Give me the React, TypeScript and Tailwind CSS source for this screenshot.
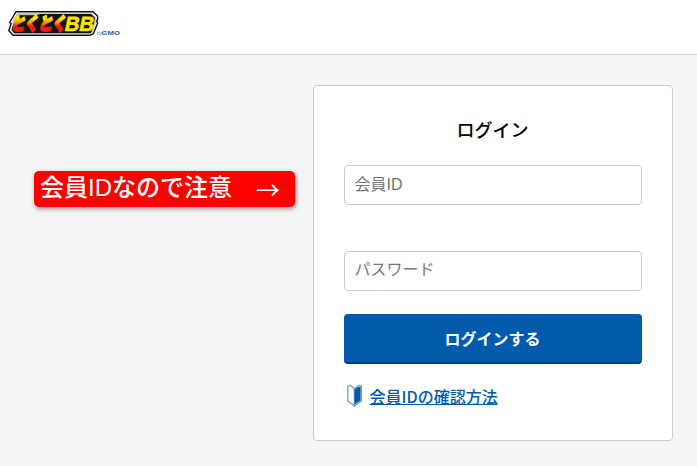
import React from "react";

const Logo: React.FC = () => (
  <svg
    className="overflow-visible"
    width="113"
    height="26"
    viewBox="0 0 113 26"
    role="img"
    aria-label="とくとくBB byGMO"
  >
    <defs>
      <linearGradient id="flame" gradientUnits="userSpaceOnUse" x1="0" y1="4" x2="0" y2="21">
        <stop offset="0.2" stopColor="#ffe600" />
        <stop offset="0.45" stopColor="#ff9100" />
        <stop offset="0.65" stopColor="#e8200f" />
      </linearGradient>
    </defs>
    {/* Badge plate */}
    <path
      d="M8 .7H85L89.6 5V8.5L88.6 10L89.6 12L85.5 22.5L82 24.3H5L.8 19.5L3.2 12.5L1.7 11.5Z"
      fill="#fff"
      stroke="#111"
      strokeWidth="1.4"
    />
    <path d="M9 2.2H84L87.8 6V12L84 22.5H5.8L3 19L5 12.5L4 11Z" fill="#bdbdbd" />
    <path d="M11 4.3H28L32 3H83L87 7L85.8 12L83 22.3H6L3.6 18.5L6 12.5L8.5 11Z" fill="#151111" />
    <g transform="skewX(-12)" fontWeight="900">
      <text
        x="6.5"
        y="19.3"
        fontFamily='"Noto Sans CJK JP", sans-serif'
        fontSize="17.5"
        textLength="55"
        lengthAdjust="spacingAndGlyphs"
        fill="url(#flame)"
        stroke="url(#flame)"
        strokeWidth="2"
      >
        とくとく
      </text>
      <text
        x="60"
        y="20.3"
        fontFamily='"Liberation Sans", sans-serif'
        fontSize="20.5"
        textLength="29"
        lengthAdjust="spacingAndGlyphs"
        fill="#f6e500"
        stroke="#f6e500"
        strokeWidth="0.6"
      >
        BB
      </text>
    </g>
    <text x="89" y="24" fontFamily='"Liberation Sans", sans-serif' fontSize="5" fill="#3f8bc9">
      by
    </text>
    <text
      x="93.5"
      y="24"
      fontFamily='"Liberation Sans", sans-serif'
      fontSize="5.5"
      fontWeight="700"
      textLength="18.5"
      lengthAdjust="spacingAndGlyphs"
      fill="#1463ac"
    >
      GMO
    </text>
  </svg>
);

const BeginnerMark: React.FC = () => (
  <svg width="16" height="24" viewBox="0 0 16 24" aria-hidden="true">
    <path
      d="M.8 3.2Q.8 1.2 2.6 1.4Q5.5 2.4 7.5 5V22L.8 17Z"
      fill="#fff"
      stroke="#6b9dcc"
      strokeWidth="1.3"
    />
    <path
      d="M7.5 5Q9.5 2.4 12.4 1.4Q14.4 1.2 14.4 3.2V17L7.5 22Z"
      fill="#fff"
      stroke="#6b9dcc"
      strokeWidth="1.3"
    />
    <path d="M7.6 5.6Q10 3.2 13.6 2.2V16.5L7.6 20.6Z" fill="#005bac" />
  </svg>
);

const App: React.FC = () => {
  return (
    <div className="h-screen overflow-hidden bg-[#f4f4f4] font-['Noto_Sans_CJK_JP',sans-serif] text-black">
      <header className="h-[55px] border-b border-[#ccc] bg-white pl-2 pt-[11px]">
        <Logo />
      </header>

      <main className="flex items-start gap-[18px] pl-[34px] pt-[30px]">
        {/* Callout next to the member ID field */}
        <div className="mt-[86px] flex h-9 w-[261px] whitespace-pre rounded-[5px] bg-[#ff0000] pl-[6px] font-['Liberation_Sans','Noto_Sans_CJK_JP',sans-serif] text-2xl font-medium leading-[32px] text-white shadow-[1px_2px_4px_rgba(0,0,0,0.4)]">
          <span className="pt-px">会員IDなので注意　</span>
          <span className="pt-0.5 font-['Noto_Sans_CJK_JP',sans-serif] font-normal">→</span>
        </div>

        <form
          className="h-[356px] w-[360px] rounded border border-[#ccc] bg-white px-[30px] pt-[30px]"
          onSubmit={(e) => e.preventDefault()}
        >
          <h1 className="-ml-px text-center text-lg font-medium leading-[26px]">ログイン</h1>
          <input
            type="text"
            placeholder="会員ID"
            className="mt-[23px] block h-10 w-full rounded border border-[#ccc] px-[9.5px] pb-px font-['Liberation_Sans','Noto_Sans_CJK_JP',sans-serif] text-base placeholder:text-[#757575]"
          />
          <input
            type="password"
            placeholder="パスワード"
            className="mt-[46px] block h-10 w-full rounded border border-[#ccc] px-[9.5px] pb-[6px] text-base placeholder:text-[#757575]"
          />
          <button
            type="submit"
            className="mt-[23px] block h-[50px] w-full rounded border-b-2 border-[#003f78] bg-[#005bac] pr-px text-base font-bold text-white"
          >
            ログインする
          </button>
          <div className="mt-[20px] flex items-center gap-[7px] pl-[3px]">
            <BeginnerMark />
            <a href="#" className="-ml-[0.5px] text-base font-medium leading-6 text-[#005bac] underline">
              会員IDの確認方法
            </a>
          </div>
        </form>
      </main>
    </div>
  );
};

export default App;
